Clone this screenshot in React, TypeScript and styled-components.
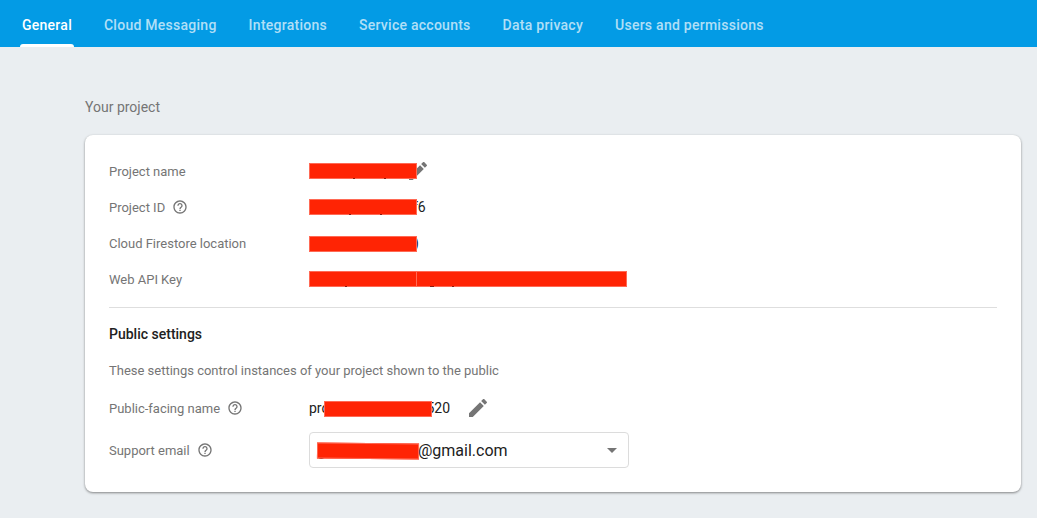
import React from "react";
import styled, { createGlobalStyle } from "styled-components";

const GlobalStyle = createGlobalStyle`
  * { box-sizing: border-box; }
  body {
    margin: 0;
    background: #eaeef1;
    font-family: Roboto, "Liberation Sans", sans-serif;
    color: #212121;
    overflow: hidden;
  }
`;

const Page = styled.div`
  height: 518px;
`;

const TabBar = styled.nav`
  display: flex;
  gap: 28px;
  height: 47px;
  padding-left: 20px;
  background: #039be5;
`;

const Tab = styled.a<{ $active?: boolean }>`
  position: relative;
  padding: 15px 2px 0;
  font-size: 14px;
  line-height: 20px;
  font-weight: 500;
  letter-spacing: 0.26px;
  white-space: nowrap;
  color: ${(p) => (p.$active ? "#fff" : "rgba(255, 255, 255, 0.7)")};

  &::after {
    content: "";
    display: ${(p) => (p.$active ? "block" : "none")};
    position: absolute;
    left: 0;
    right: 0;
    bottom: 0;
    height: 3px;
    border-radius: 3px 3px 0 0;
    background: #fff;
  }
`;

const Content = styled.main`
  padding: 50px 16px 0 85px;
`;

const SectionTitle = styled.h2`
  margin: 0;
  font-size: 14px;
  line-height: 20px;
  font-weight: 400;
  color: #757575;
`;

const Card = styled.section`
  margin-top: 18px;
  height: 357px;
  padding: 18px 24px 0;
  border-radius: 8px;
  background: #fff;
  box-shadow: 0 1px 3px rgba(0, 0, 0, 0.28), 0 1px 2px rgba(0, 0, 0, 0.2);
`;

const Row = styled.div<{ $height?: number }>`
  display: flex;
  align-items: center;
  height: ${(p) => p.$height ?? 36}px;
`;

const Label = styled.div`
  display: flex;
  align-items: center;
  gap: 7px;
  flex: 0 0 200px;
  padding-top: 2px;
  font-size: 13px;
  line-height: 20px;
  letter-spacing: -0.01px;
  color: #757575;
`;

const Value = styled.div`
  display: flex;
  align-items: center;
  font-size: 14px;
  line-height: 20px;
  white-space: nowrap;
`;

const Redaction = styled.span<{ $width: number; $tilt?: number; $drop?: number }>`
  position: relative;
  z-index: 1;
  flex: none;
  width: ${(p) => p.$width}px;
  height: 16px;
  margin-top: ${(p) => (p.$drop ?? 0) * 2}px;
  border: 1px solid #ff6a55;
  background: #ff2404;
  transform: rotate(${(p) => p.$tilt ?? 0}deg);
`;

const Descender = styled.i<{ $left: number; $width?: number }>`
  position: absolute;
  left: ${(p) => p.$left}px;
  bottom: -1px;
  width: ${(p) => p.$width ?? 2}px;
  height: 1px;
  background: #8a1c10;
`;

const Tucked = styled.span<{ $by: number }>`
  display: flex;
  margin-left: -${(p) => p.$by}px;
`;

const Divider = styled.hr`
  margin: 10px 0 0;
  border: 0;
  border-top: 1px solid #dedede;
`;

const Subheading = styled.h3`
  margin: 16px 0 0;
  font-size: 14px;
  line-height: 20px;
  font-weight: 500;
`;

const Description = styled.p`
  margin: 17px 0 6px;
  font-size: 13px;
  line-height: 20px;
  letter-spacing: -0.01px;
  color: #757575;
`;

const Select = styled.div`
  display: flex;
  align-items: center;
  width: 320px;
  height: 36px;
  padding: 2px 11px 0 7px;
  border: 1px solid #dcdcdc;
  border-radius: 4px;
  font-size: 16px;
  line-height: 24px;
`;

const Caret = styled.span`
  margin: -2px 0 0 auto;
  border: 5px solid transparent;
  border-top-color: #757575;
  border-bottom: 0;
`;

const Icon = styled.svg`
  display: block;
  flex: none;
  fill: #757575;

  ${Label} & {
    margin-top: -2px;
  }
`;

const HelpIcon = () => (
  <Icon width="16" height="16" viewBox="0 0 24 24">
    <path d="M11 18h2v-2h-2v2zm1-16C6.48 2 2 6.48 2 12s4.48 10 10 10 10-4.48 10-10S17.52 2 12 2zm0 18c-4.41 0-8-3.59-8-8s3.59-8 8-8 8 3.59 8 8-3.59 8-8 8zm0-14c-2.21 0-4 1.79-4 4h2c0-1.1.9-2 2-2s2 .9 2 2c0 2-3 1.75-3 5h2c0-2.25 3-2.5 3-5 0-2.21-1.79-4-4-4z" />
  </Icon>
);

const PencilIcon = ({ size }: { size: number }) => (
  <Icon width={size} height={size} viewBox="3 3 18 18">
    <path d="M3 17.25V21h3.75L17.81 9.94l-3.75-3.75L3 17.25zM20.71 7.04c.39-.39.39-1.02 0-1.41l-2.34-2.34c-.39-.39-1.02-.39-1.41 0l-1.83 1.83 3.75 3.75 1.83-1.83z" />
  </Icon>
);

const EditButton = styled.span`
  display: flex;
  margin-left: 19px;
`;

const tabs = [
  "General",
  "Cloud Messaging",
  "Integrations",
  "Service accounts",
  "Data privacy",
  "Users and permissions",
];

export default function App() {
  return (
    <Page>
      <GlobalStyle />
      <TabBar>
        {tabs.map((tab, i) => (
          <Tab key={tab} $active={i === 0}>
            {tab}
          </Tab>
        ))}
      </TabBar>
      <Content>
        <SectionTitle>Your project</SectionTitle>
        <Card>
          <Row>
            <Label>Project name</Label>
            <Value>
              <Redaction $width={108}>
                <Descender $left={43} />
                <Descender $left={74} />
              </Redaction>
              <Tucked $by={8}>
                <PencilIcon size={18} />
              </Tucked>
            </Value>
          </Row>
          <Row>
            <Label>
              Project ID
              <HelpIcon />
            </Label>
            <Value>
              <Redaction $width={108}>
                <Descender $left={39} />
                <Descender $left={70} />
              </Redaction>
              <Tucked $by={4}>f6</Tucked>
            </Value>
          </Row>
          <Row>
            <Label>Cloud Firestore location</Label>
            <Value>
              <Redaction $width={108} $drop={1} />
              <Tucked $by={3}>)</Tucked>
            </Value>
          </Row>
          <Row>
            <Label>Web API Key</Label>
            <Value>
              <Redaction $width={108}>
                <Descender $left={35} />
              </Redaction>
              <Tucked $by={1}>
                <Redaction $width={211}>
                  <Descender $left={13} $width={4} />
                  <Descender $left={35} />
                </Redaction>
              </Tucked>
            </Value>
          </Row>
          <Divider />
          <Subheading>Public settings</Subheading>
          <Description>
            These settings control instances of your project shown to the public
          </Description>
          <Row $height={42}>
            <Label>
              Public-facing name
              <HelpIcon />
            </Label>
            <Value>
              pro
              <Tucked $by={5}>
                <Redaction $width={108} $drop={1} />
              </Tucked>
              <Tucked $by={6}>520</Tucked>
              <EditButton>
                <PencilIcon size={18} />
              </EditButton>
            </Value>
          </Row>
          <Row $height={42}>
            <Label>
              Support email
              <HelpIcon />
            </Label>
            <Select>
              g
              <Tucked $by={9}>
                <Redaction $width={102} $tilt={0.5} />
              </Tucked>
              <Tucked $by={1}>@gmail.com</Tucked>
              <Caret />
            </Select>
          </Row>
        </Card>
      </Content>
    </Page>
  );
}
